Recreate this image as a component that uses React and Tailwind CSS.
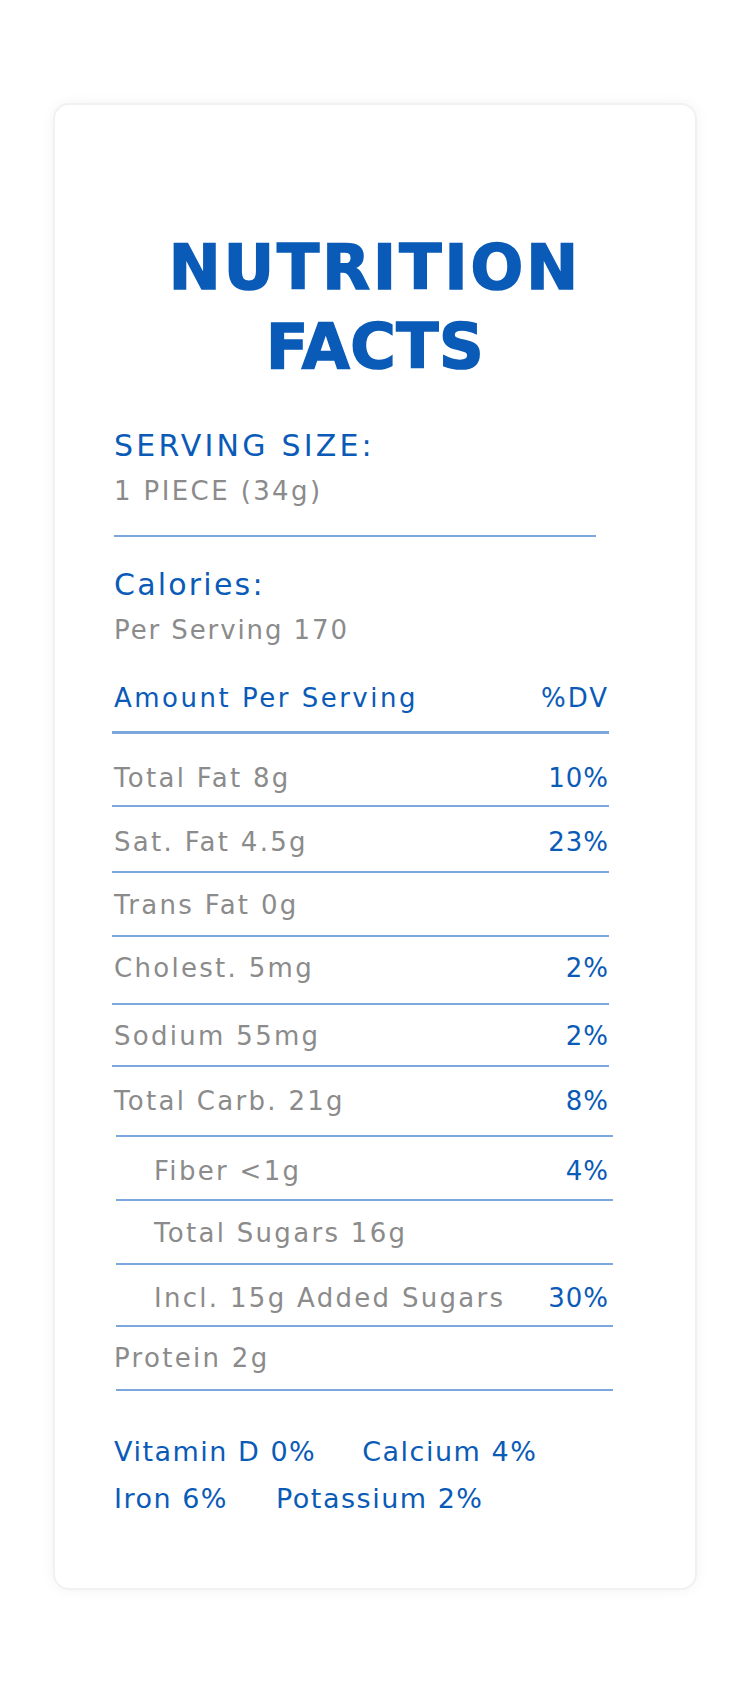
import React from 'react';

const BLUE = 'text-[#0a5bb7]';
const GRAY = 'text-[#8b8b8b]';

// per-row spacing picked to line up with the printed label
const ROWS = [
  { label: 'Total Fat 8g', dv: '10%', pad: 'pt-[28px] pb-[11px]' },
  { label: 'Sat. Fat 4.5g', dv: '23%', pad: 'pt-[19px] pb-[13px]' },
  { label: 'Trans Fat 0g', dv: '', pad: 'pt-[16px] pb-[14px]' },
  { label: 'Cholest. 5mg', dv: '2%', pad: 'pt-[15px] pb-[19px]' },
  { label: 'Sodium 55mg', dv: '2%', pad: 'pt-[15px] pb-[13px]' },
  { label: 'Total Carb. 21g', dv: '8%', pad: 'pt-[18px] pb-[18px]', shift: true },
  { label: 'Fiber <1g', dv: '4%', pad: 'pt-[18px] pb-[12px]', indent: true, shift: true },
  { label: 'Total Sugars 16g', dv: '', pad: 'pt-[16px] pb-[14px]', indent: true, shift: true },
  { label: 'Incl. 15g Added Sugars', dv: '30%', pad: 'pt-[17px] pb-[11px]', indent: true, shift: true },
  { label: 'Protein 2g', dv: '', pad: 'pt-[15px] pb-[15px]', shift: true },
];

function Row({ row }) {
  return (
    <div>
      <div className={`flex justify-between items-center ${row.pad}`}>
        <span className={`${GRAY} text-[26px] leading-[32px] tracking-[2.3px] ${row.indent ? 'pl-[42px]' : 'pl-[2px]'}`}>
          {row.label}
        </span>
        <span className={`${BLUE} text-[26px] leading-[32px] tracking-[1px]`}>{row.dv}</span>
      </div>
      <div className={`h-[2px] w-[497px] bg-[#7ba7dc] ${row.shift ? 'ml-[4px]' : ''}`} />
    </div>
  );
}

export default function App() {
  return (
    <div className="min-h-[1692px] bg-white pt-[103px] font-['DejaVu_Sans',sans-serif]">
      <div className="mx-auto w-[644px] rounded-[16px] border-2 border-[#f1f1f1] bg-white shadow-[0_0_14px_rgba(0,0,0,0.05)]">
        <h1 className={`${BLUE} pt-[123px] text-center text-[62px] leading-[79px] font-bold [-webkit-text-stroke:1.6px_#0a5bb7]`}>
          <span className="block tracking-[3px]">NUTRITION</span>
          <span className="block tracking-[0.5px]">FACTS</span>
        </h1>

        <div className="pl-[57px] pr-[86px] pb-[66px]">
          <div className={`${BLUE} mt-[42px] pl-[2px] text-[30px] leading-[36px] tracking-[3.2px]`}>SERVING SIZE:</div>
          <div className={`${GRAY} mt-[11px] pl-[2px] text-[26px] leading-[32px] tracking-[2.4px]`}>1 PIECE (34g)</div>
          <div className="mt-[28px] ml-[2px] h-[2px] w-[482px] bg-[#7ba7dc]" />

          <div className={`${BLUE} mt-[30px] pl-[2px] text-[30px] leading-[36px] tracking-[2.2px]`}>Calories:</div>
          <div className={`${GRAY} mt-[11px] pl-[2px] text-[26px] leading-[32px] tracking-[1.9px]`}>Per Serving 170</div>

          <div className={`${BLUE} mt-[36px] flex justify-between text-[26px] leading-[32px]`}>
            <span className="pl-[2px] tracking-[2.5px]">Amount Per Serving</span>
            <span className="tracking-[2px]">%DV</span>
          </div>
          <div className="mt-[17px] h-[3px] w-[497px] bg-[#7ba7dc]" />

          {ROWS.map((row) => (
            <Row key={row.label} row={row} />
          ))}

          <div className={`${BLUE} mt-[37px] pl-[2px] text-[27px] leading-[47px] tracking-[1.5px]`}>
            <div className="flex gap-[46px]">
              <span>Vitamin D 0%</span>
              <span>Calcium 4%</span>
            </div>
            <div className="flex gap-[48px]">
              <span>Iron 6%</span>
              <span>Potassium 2%</span>
            </div>
          </div>
        </div>
      </div>
    </div>
  );
}
